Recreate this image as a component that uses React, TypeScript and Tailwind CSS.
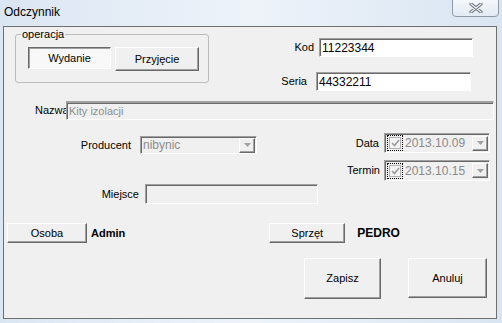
import React from "react";

const raised =
  "bg-[#f0f0f0] border border-t-white border-l-white border-r-[#696969] border-b-[#696969] shadow-[inset_-1px_-1px_0_#a0a0a0]";
const sunken =
  "border border-t-[#a0a0a0] border-l-[#a0a0a0] border-r-white border-b-white shadow-[inset_1px_1px_0_#696969]";

function Btn({ children, className = "" }: { children: React.ReactNode; className?: string }) {
  return (
    <button type="button" className={`flex items-center justify-center text-black ${raised} ${className}`}>
      {children}
    </button>
  );
}

function Arrow() {
  return (
    <div className={`w-[16px] h-[15px] flex items-center justify-center ${raised}`}>
      <svg width="7" height="4" viewBox="0 0 7 4">
        <path d="M0 0h7L3.5 4z" fill="#a0a0a0" />
      </svg>
    </div>
  );
}

function DatePick({ value, className = "" }: { value: string; className?: string }) {
  return (
    <div className={`flex items-center w-[106px] bg-[#f0f0f0] pl-[2px] pr-[1px] ${sunken} ${className}`}>
      <div className="w-[16px] h-[16px] border border-dotted border-black flex items-center justify-center">
        <div className="w-[12px] h-[12px] border border-[#b0b0b0] bg-[#f4f4f4] flex items-center justify-center">
          <svg width="9" height="8" viewBox="0 0 9 8">
            <path d="M1 4l2.5 2.5L8 1" stroke="#9a9a9a" strokeWidth="1.6" fill="none" />
          </svg>
        </div>
      </div>
      <span className="ml-[2px] text-[#8a8a8a] text-[12px]">{value}</span>
      <div className="ml-auto">
        <Arrow />
      </div>
    </div>
  );
}

export default function App() {
  return (
    <div className="w-[502px] h-[323px] overflow-hidden bg-gradient-to-r from-[#dbe6f3] via-[#eef3fa] to-[#d9e5f2] font-['Liberation_Sans',Arial,sans-serif] text-[11px] text-black">
      {/* barre de titre */}
      <div className="h-[26px] flex items-start justify-between">
        <span className="ml-[4px] mt-[5px] text-[12px] leading-[14px]">Odczynnik</span>
        <div className="-mt-px mr-[3px] w-[47px] h-[18px] rounded-b-[4px] border border-[#8f9aa8] bg-gradient-to-b from-[#f4f7fb] to-[#e3eaf3] flex items-center justify-center">
          <svg width="14" height="10" viewBox="0 0 14 10">
            <path d="M2 1l10 8M12 1L2 9" stroke="#5f6670" strokeWidth="3.2" strokeLinecap="round" />
            <path d="M2 1l10 8M12 1L2 9" stroke="#f4f6f9" strokeWidth="1.4" strokeLinecap="round" />
          </svg>
        </div>
      </div>

      {/* zone client */}
      <div className="ml-[3px] w-[494px] h-[293px] border border-[#707070] bg-[#f0f0f0] flex flex-col">
        {/* operacja + kod/seria */}
        <div className="flex">
          <fieldset className="ml-[11px] mt-[1px] w-[194px] h-[55px] border border-[#bcbcbc] rounded-[3px]">
            <legend className="ml-[5px] px-[1px] leading-[13px]">operacja</legend>
            <div className="flex items-start gap-[4px] ml-[12px] mt-[6px]">
              <button
                type="button"
                className="w-[83px] h-[22px] flex items-center justify-center bg-[#f8f8f8] border border-t-[#696969] border-l-[#696969] border-r-white border-b-white shadow-[inset_1px_1px_0_#a0a0a0]"
              >
                Wydanie
              </button>
              <Btn className="w-[84px] h-[24px]">Przyjęcie</Btn>
            </div>
          </fieldset>
          <div className="flex flex-col">
            <div className="flex items-center mt-[11px]">
              <span className="w-[105px] text-right">Kod</span>
              <div className={`ml-[5px] w-[154px] h-[19px] bg-white pl-[2px] flex items-center text-[12px] ${sunken}`}>
                11223344
              </div>
            </div>
            <div className="flex items-center mt-[15px]">
              <span className="w-[98px] text-right">Seria</span>
              <div className={`ml-[9px] w-[155px] h-[19px] bg-white pl-[2px] flex items-center text-[12px] ${sunken}`}>
                44332211
              </div>
            </div>
          </div>
        </div>

        {/* nazwa */}
        <div className="flex items-center mt-[10px]">
          <span className="ml-[31px] w-[31px]">Nazwa</span>
          <div className={`w-[428px] h-[19px] bg-[#f0f0f0] pl-[2px] flex items-center text-[#8d8d8d] border-t-2 ${sunken}`}>
            Kity izolacji
          </div>
        </div>

        {/* producent / miejsce / data / termin */}
        <div className="flex mt-[13px]">
          <div className="w-[314px] flex flex-col">
            <div className="flex items-center mt-[3px]">
              <span className="w-[127px] text-right">Producent</span>
              <div className={`ml-[9px] w-[117px] h-[18px] bg-[#f0f0f0] pl-[2px] pr-[1px] flex items-center justify-between text-[#8d8d8d] text-[12px] ${sunken}`}>
                nibynic
                <Arrow />
              </div>
            </div>
            <div className="flex items-center mt-[30px]">
              <span className="w-[135px] text-right">Miejsce</span>
              <div className={`ml-[6px] w-[173px] h-[20px] bg-[#f0f0f0] ${sunken}`} />
            </div>
          </div>
          <div className="flex flex-col">
            <div className="flex items-center">
              <span className="w-[61px] text-right">Data</span>
              <DatePick value="2013.10.09" className="ml-[5px] h-[20px]" />
            </div>
            <div className="flex items-center mt-[7px]">
              <span className="w-[62px] text-right">Termin</span>
              <DatePick value="2013.10.15" className="ml-[4px] h-[21px]" />
            </div>
          </div>
        </div>

        {/* osoba / sprzet */}
        <div className="flex items-center mt-[19px]">
          <Btn className="ml-[3px] w-[80px] h-[20px]">Osoba</Btn>
          <span className="ml-[4px] font-bold">Admin</span>
          <Btn className="ml-[144px] w-[76px] h-[20px]">Sprzęt</Btn>
          <span className="ml-[12px] font-bold text-[12px]">PEDRO</span>
        </div>

        {/* zapisz / anuluj */}
        <div className="flex items-start mt-[15px]">
          <Btn className="ml-[300px] w-[77px] h-[41px]">Zapisz</Btn>
          <Btn className="ml-[27px] w-[79px] h-[40px]">Anuluj</Btn>
        </div>
      </div>
    </div>
  );
}
